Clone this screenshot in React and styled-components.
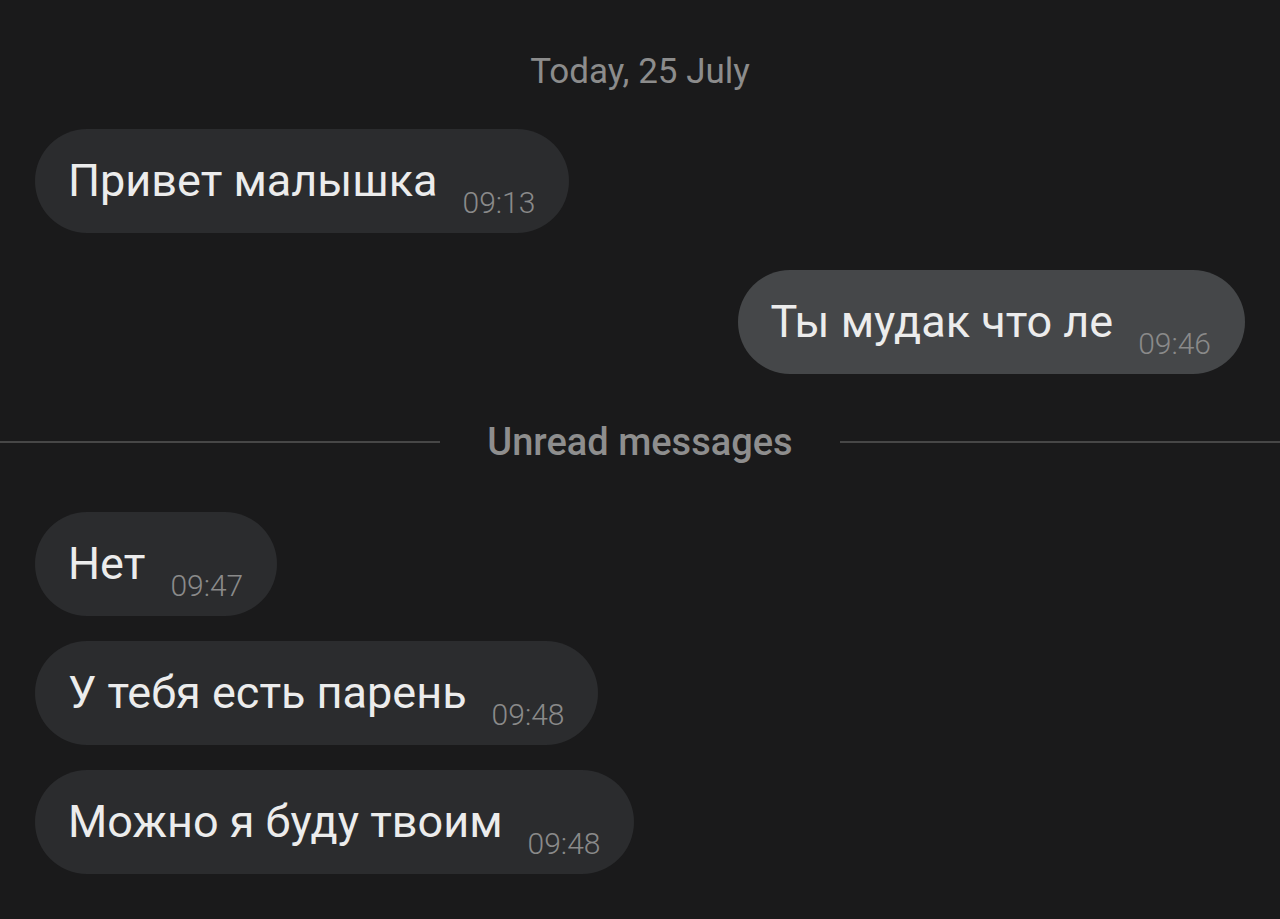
import React from "react";
import styled, { createGlobalStyle } from "styled-components";

const GlobalStyle = createGlobalStyle`
  html, body {
    margin: 0;
    padding: 0;
    background: #1a1a1b;
  }
  body {
    font-family: Roboto, "Noto Sans", "DejaVu Sans", sans-serif;
  }
`;

const messages = [
  { id: 1, text: "Привет малышка", time: "09:13", mine: false, gap: 37 },
  { id: 2, text: "Ты мудак что ле", time: "09:46", mine: true, gap: 37 },
];

const unread = [
  { id: 3, text: "Нет", time: "09:47", gap: 52 },
  { id: 4, text: "У тебя есть парень", time: "09:48", gap: 25 },
  { id: 5, text: "Можно я буду твоим", time: "09:48", gap: 25 },
];

const Message = ({ text, time, mine, gap }) => (
  <Row $mine={mine} $gap={gap}>
    <Bubble $mine={mine}>
      <Text>{text}</Text>
      <Time>{time}</Time>
    </Bubble>
  </Row>
);

const App = () => {
  return (
    <Screen>
      <GlobalStyle />
      <DateLabel>Today, 25 July</DateLabel>
      {messages.map((m) => (
        <Message key={m.id} {...m} />
      ))}
      <Divider>
        <Line />
        <DividerText>Unread messages</DividerText>
        <Line />
      </Divider>
      {unread.map((m) => (
        <Message key={m.id} {...m} />
      ))}
    </Screen>
  );
};

const Screen = styled.div`
  min-height: 919px;
  box-sizing: border-box;
  padding-top: 52px;
  display: flex;
  flex-direction: column;
  background: #1a1a1b;
`;

const DateLabel = styled.div`
  height: 40px;
  line-height: 40px;
  text-align: center;
  font-size: 35px;
  color: #8c8c8c;
`;

const Row = styled.div`
  display: flex;
  justify-content: ${(p) => (p.$mine ? "flex-end" : "flex-start")};
  padding: 0 35px;
  margin-top: ${(p) => p.$gap}px;
`;

const Bubble = styled.div`
  height: 104px;
  box-sizing: border-box;
  padding: 0 34px 0 33px;
  border-radius: 52px;
  display: flex;
  align-items: center;
  gap: 25px;
  background: ${(p) => (p.$mine ? "#454749" : "#2b2c2e")};
`;

const Text = styled.span`
  font-size: 45px;
  line-height: 52px;
  color: #ececec;
  white-space: nowrap;
`;

const Time = styled.span`
  margin-top: 43px;
  font-size: 30px;
  line-height: 34px;
  font-weight: 300;
  color: #8a8a8a;
  white-space: nowrap;
`;

const Divider = styled.div`
  margin-top: 46px;
  height: 40px;
  display: grid;
  grid-template-columns: 1fr auto 1fr;
  align-items: center;
  column-gap: 47px;
`;

const Line = styled.div`
  height: 2px;
  background: #474747;
`;

const DividerText = styled.div`
  font-size: 38px;
  font-weight: 500;
  color: #8e8e8e;
`;

export default App;
